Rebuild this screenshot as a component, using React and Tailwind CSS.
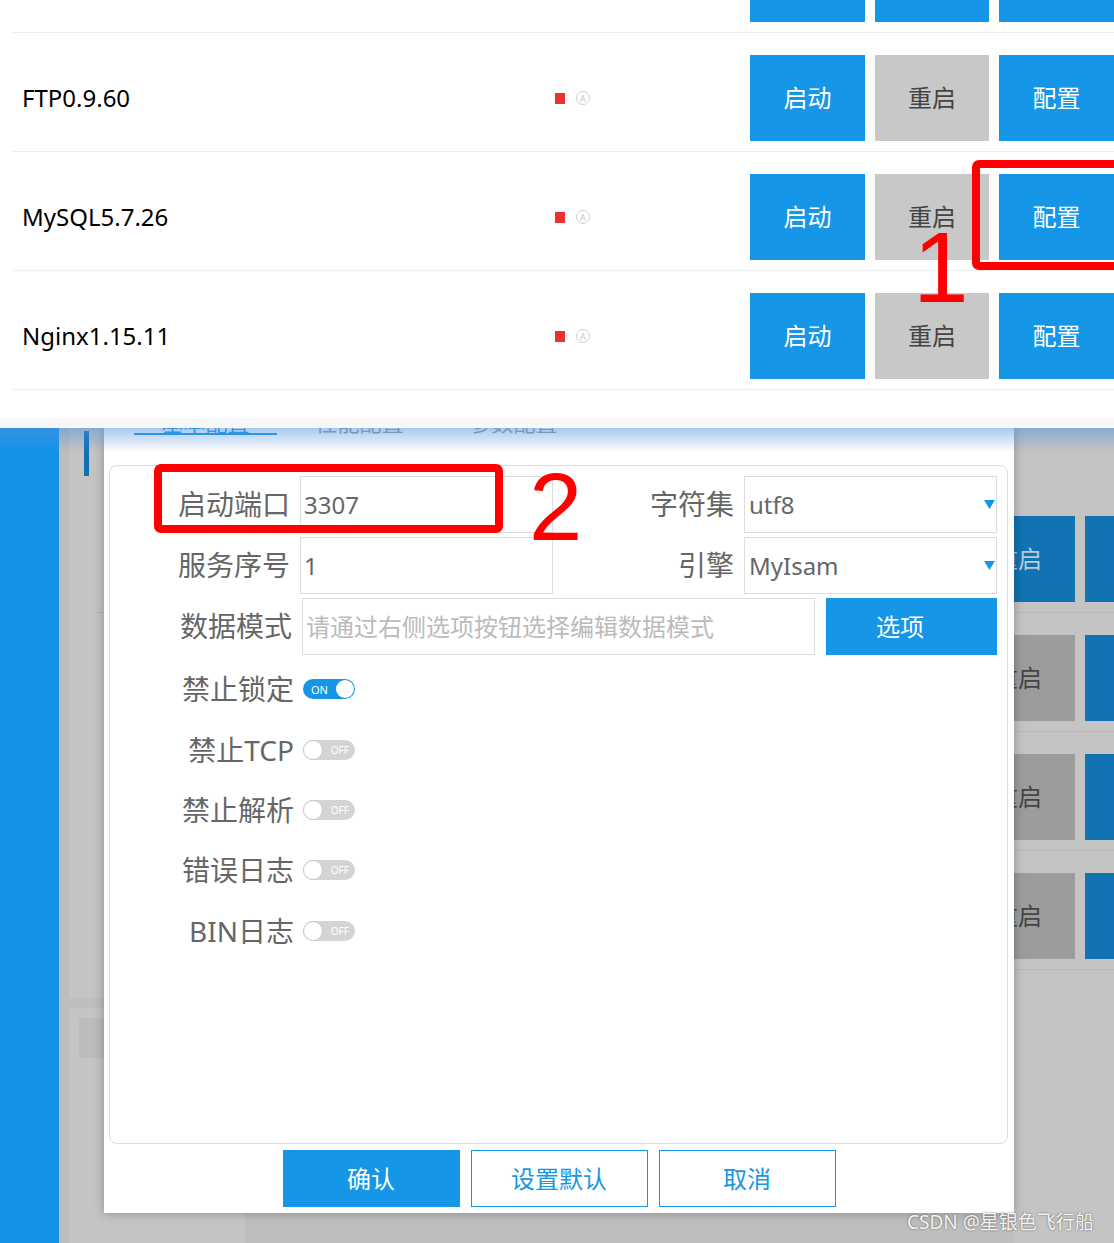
/**
 * App.jsx
 * Service list (FTP / MySQL / Nginx) with the MySQL config dialog
 * opened underneath, plus the red tutorial annotations.
 */

const services = ['FTP0.9.60', 'MySQL5.7.26', 'Nginx1.15.11']

const toggles = [
  { label: '禁止锁定', on: true },
  { label: '禁止TCP', on: false },
  { label: '禁止解析', on: false },
  { label: '错误日志', on: false },
  { label: 'BIN日志', on: false },
]

function ServiceRow({ name }) {
  return (
    <div className="flex h-[119px] items-center border-b border-[#eeeeee] pt-[22px] pb-[10px]">
      <span className="w-[543px] pl-[10px] text-[24px] text-black">{name}</span>
      <div className="flex w-[195px] items-center gap-[11px]">
        <span className="h-[11px] w-[10px] bg-[#e83333]" />
        <span className="flex h-[14px] w-[14px] items-center justify-center rounded-full border border-[#cfcfcf] text-[9px] leading-none text-[#c8c8c8]">
          A
        </span>
      </div>
      <div className="flex h-full gap-[10px]">
        <button className="w-[115px] bg-[#1596e6] text-[24px] text-white">启动</button>
        <button className="w-[114px] bg-[#c8c8c8] text-[24px] text-[#444]">重启</button>
        <button className="w-[115px] bg-[#1596e6] text-[24px] text-white">配置</button>
      </div>
    </div>
  )
}

function ServiceList() {
  return (
    <div className="relative z-10 h-[428px] bg-white">
      <div className="h-[418px] overflow-hidden pl-[12px]">
        {/* tail of the row scrolled above */}
        <div className="flex h-[33px] gap-[10px] border-b border-[#eeeeee] pl-[738px]">
          <div className="h-[22px] w-[115px] bg-[#1596e6]" />
          <div className="h-[22px] w-[114px] bg-[#1596e6]" />
          <div className="h-[22px] w-[115px] bg-[#1596e6]" />
        </div>
        {services.map((s) => (
          <ServiceRow key={s} name={s} />
        ))}
      </div>
      <div className="h-[10px] bg-[#f7f7f7]" />
    </div>
  )
}

function Toggle({ on }) {
  if (on) {
    return (
      <div className="flex h-[20px] w-[52px] items-center justify-between rounded-full bg-[#1596e6] pr-[1px] pl-[8px]">
        <span className="text-[11px] leading-none text-white">ON</span>
        <span className="h-[18px] w-[18px] rounded-full bg-white" />
      </div>
    )
  }
  return (
    <div className="flex h-[20px] w-[52px] items-center justify-between rounded-full bg-[#d4d4d4] pr-[6px]">
      <span className="h-[20px] w-[20px] rounded-full border border-[#c9c9c9] bg-white" />
      <span className="text-[10px] leading-none text-white">OFF</span>
    </div>
  )
}

function Caret() {
  return (
    <svg width="11" height="11" viewBox="0 0 11 11">
      <polygon points="0,1 11,1 5.5,10" fill="#1596e6" />
    </svg>
  )
}

function Dialog() {
  return (
    <div className="relative z-[1] flex h-[785px] flex-col bg-white shadow-[0_0_10px_rgba(0,0,0,0.28)]">
      {/* tabs, mostly hidden under the list above */}
      <div className="-mt-[17px] flex gap-[11px] pl-[30px]">
        <div className="w-[143px] border-b-2 border-[#1596e6] text-center text-[22px] leading-[22px] text-[#1596e6]">基本配置</div>
        <div className="w-[143px] border-b-2 border-transparent text-center text-[22px] leading-[22px] text-[#999]">性能配置</div>
        <div className="w-[143px] border-b-2 border-transparent text-center text-[22px] leading-[22px] text-[#999]">参数配置</div>
      </div>

      <div className="mt-[30px] ml-[5px] h-[679px] w-[899px] rounded-[8px] border border-[#dddddd] pt-[10px] text-[#666]">
        <div className="flex h-[57px]">
          <span className="w-[190px] pr-[10px] text-right text-[28px] leading-[57px]">启动端口</span>
          <div className="w-[253px] border border-[#dddddd] pl-[3px] text-[24px] leading-[55px]">3307</div>
          <span className="w-[191px] pr-[10px] text-right text-[28px] leading-[57px]">字符集</span>
          <div className="flex w-[253px] items-center justify-between border border-[#dddddd] pr-[1px] pl-[4px] text-[24px]">
            <span>utf8</span>
            <Caret />
          </div>
        </div>

        <div className="mt-[4px] flex h-[57px]">
          <span className="w-[190px] pr-[10px] text-right text-[28px] leading-[57px]">服务序号</span>
          <div className="w-[253px] border border-[#dddddd] pl-[3px] text-[24px] leading-[55px]">1</div>
          <span className="w-[191px] pr-[10px] text-right text-[28px] leading-[57px]">引擎</span>
          <div className="flex w-[253px] items-center justify-between border border-[#dddddd] pr-[1px] pl-[4px] text-[24px]">
            <span>MyIsam</span>
            <Caret />
          </div>
        </div>

        <div className="mt-[4px] flex h-[57px]">
          <span className="w-[190px] pr-[8px] text-right text-[28px] leading-[57px]">数据模式</span>
          <div className="ml-[2px] w-[513px] border border-[#dddddd] pl-[3px] text-[24px] leading-[55px] text-[#bbbbbb]">
            请通过右侧选项按钮选择编辑数据模式
          </div>
          <button className="ml-[11px] w-[171px] bg-[#1596e6] pr-[23px] text-[24px] text-white">选项</button>
        </div>

        <div className="mt-[4px]">
          {toggles.map((t) => (
            <div key={t.label} className="flex h-[60.4px] items-center">
              <span className="w-[184px] text-right text-[28px]">{t.label}</span>
              <div className="ml-[9px]">
                <Toggle on={t.on} />
              </div>
            </div>
          ))}
        </div>
      </div>

      <div className="mt-[6px] flex justify-center gap-[11px]">
        <button className="h-[57px] w-[177px] bg-[#1596e6] text-[24px] text-white">确认</button>
        <button className="h-[57px] w-[177px] border-[1.5px] border-[#1596e6] bg-white text-[24px] text-[#1596e6]">设置默认</button>
        <button className="h-[57px] w-[177px] border-[1.5px] border-[#1596e6] bg-white text-[24px] text-[#1596e6]">取消</button>
      </div>
    </div>
  )
}

function DimmedList() {
  return (
    <div className="w-[100px] shrink-0 overflow-hidden">
      <div className="-ml-[53px] w-[300px] pt-[88px]">
        {[0, 1, 2, 3].map((i) => (
          <div key={i} className="mb-[22px] border-b border-[#bababa] pb-[10px]">
            <div className="flex h-[86px] gap-[10px]">
              {i === 0 ? (
                <div className="flex w-[114px] items-center justify-center bg-[#1173b2] text-[24px] text-[#b8cbdb]">重启</div>
              ) : (
                <div className="flex w-[114px] items-center justify-center bg-[#9c9c9c] text-[24px] text-[#444]">重启</div>
              )}
              <div className="w-[115px] bg-[#1173b2]" />
            </div>
          </div>
        ))}
      </div>
    </div>
  )
}

function ConfigArea() {
  return (
    <div className="relative flex h-[815px] bg-[#c4c4c4]">
      <div className="w-[59px] shrink-0 bg-[#1493e6]" />
      <div className="w-[10px] shrink-0 bg-[#bdbdbd]" />
      <div className="flex w-[35px] shrink-0 flex-col">
        <div className="mt-[3px] ml-[15px] h-[45px] w-[5px] bg-[#1070b0]" />
        <div className="mt-[136px] ml-[28px] h-px w-[7px] bg-[#b5b5b5]" />
        <div className="mt-[385px] h-[10px] bg-[#bebebe]" />
        <div className="mt-[10px] ml-[10px] h-[40px] bg-[#bcbcbc]" />
      </div>
      <div className="flex w-[910px] shrink-0 flex-col">
        <Dialog />
        <div className="flex h-[30px]">
          <div className="w-[141px] bg-[#c4c4c4]" />
          <div className="flex-1 bg-[#bebebe]" />
        </div>
      </div>
      <DimmedList />
      {/* shadow cast by the list panel above */}
      <div className="pointer-events-none absolute inset-x-0 top-0 z-[2] h-[24px] bg-gradient-to-b from-[rgba(81,145,225,0.5)] to-transparent" />
    </div>
  )
}

export default function App() {
  return (
    <div className="relative h-[1243px] w-[1114px] overflow-hidden bg-white font-['Noto_Sans','Noto_Sans_CJK_SC',sans-serif]">
      <ServiceList />
      <ConfigArea />

      {/* red tutorial marks */}
      <div className="absolute top-[160px] left-[972px] z-20 h-[110px] w-[170px] rounded-[7px] border-[8px] border-[#ff0000]" />
      <span className="absolute top-[217px] left-[913px] z-20 font-['Liberation_Sans',sans-serif] text-[100px] leading-none text-[#ff0000]">1</span>
      <div className="absolute top-[464px] left-[154px] z-20 h-[69px] w-[349px] rounded-[7px] border-[8px] border-[#ff0000]" />
      <span className="absolute top-[459px] left-[529px] z-20 font-['Liberation_Sans',sans-serif] text-[96px] leading-none text-[#ff0000]">2</span>

      <span className="absolute top-[1213px] left-[907px] z-20 text-[19px] leading-none text-[#f4f4f4] [text-shadow:0_0_2px_#555]">
        CSDN @星银色飞行船
      </span>
    </div>
  )
}
